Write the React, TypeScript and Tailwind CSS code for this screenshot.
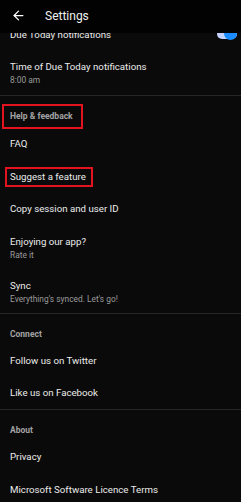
import React from "react";
import { ArrowLeft } from "lucide-react";

function Item({ title, sub, h }: { title: string; sub?: string; h: string }) {
  return (
    <div className={`flex flex-col justify-center px-[10px] ${h}`}>
      <div className="text-[9.7px] leading-[14px] text-[#ececec]">{title}</div>
      {sub && <div className="text-[8.4px] leading-[12px] text-[#9a9a9a]">{sub}</div>}
    </div>
  );
}

function Section({ label }: { label: string }) {
  return (
    <div className="px-[10px] pt-[14px] pb-[6px] text-[8.5px] leading-[12px] font-bold text-[#a3a3a3]">
      {label}
    </div>
  );
}

export default function App() {
  return (
    <div
      className="w-[241px] h-[502px] overflow-hidden bg-[#0a0a0a] flex flex-col"
      style={{ fontFamily: "Roboto, 'Liberation Sans', sans-serif" }}
    >
      <header className="relative z-10 h-[33px] shrink-0 bg-[#020202] flex items-center pl-[11px] pb-[2px] gap-[19px]">
        <ArrowLeft size={15} strokeWidth={2} className="text-white" />
        <span className="text-[12px] text-[#f0f0f0]">Settings</span>
      </header>

      <div className="flex flex-col">
        {/* row scrolled partly under the header */}
        <div className="-mt-[12px] h-[28px] flex items-center justify-between pl-[10px] pr-[4px]">
          <span className="text-[9.7px] leading-[14px] text-[#ececec]">Due Today notifications</span>
          <div className="relative w-[20px] h-[10px] rounded-full bg-[#c3d2ff] -mt-[2px]">
            <div className="absolute right-0 top-[-2px] w-[13px] h-[13px] rounded-full bg-[#1a8cff]" />
          </div>
        </div>
        <div className="px-[10px] pt-[11px] pb-[9px]">
          <div className="text-[9.7px] leading-[14px] text-[#ececec]">Time of Due Today notifications</div>
          <div className="text-[8.4px] leading-[12px] text-[#9a9a9a]">8:00 am</div>
        </div>
        <div className="h-px bg-[#252525]" />

        <div className="pt-[6px]">
          <div className="ml-[2px] inline-flex items-center h-[25px] border-2 border-[#e3141f] pl-[6px] pr-[8px] text-[8.5px] font-bold text-[#a3a3a3]">
            Help &amp; feedback
          </div>
        </div>
        <Item title="FAQ" h="h-[31px]" />
        <div className="h-[34px] flex items-center">
          <div className="ml-[5px] h-[20px] inline-flex items-center border-2 border-[#e3141f] pl-[3px] pr-[5px] text-[9.7px] text-[#ececec]">
            Suggest a feature
          </div>
        </div>
        <Item title="Copy session and user ID" h="h-[30px]" />
        <div className="px-[10px] pt-[11px] pb-[7px]">
          <div className="text-[9.7px] leading-[14px] text-[#ececec]">Enjoying our app?</div>
          <div className="text-[8.4px] leading-[12px] text-[#9a9a9a]">Rate it</div>
        </div>
        <div className="px-[10px] pt-[11px] pb-[8px]">
          <div className="text-[9.7px] leading-[14px] text-[#ececec]">Sync</div>
          <div className="text-[8.4px] leading-[12px] text-[#9a9a9a]">Everything's synced. Let's go!</div>
        </div>
        <div className="h-px bg-[#252525]" />

        <Section label="Connect" />
        <Item title="Follow us on Twitter" h="h-[31px]" />
        <Item title="Like us on Facebook" h="h-[32px]" />
        <div className="h-px bg-[#252525]" />

        <Section label="About" />
        <Item title="Privacy" h="h-[31px]" />
        <Item title="Microsoft Software Licence Terms" h="h-[34px]" />
      </div>
    </div>
  );
}
